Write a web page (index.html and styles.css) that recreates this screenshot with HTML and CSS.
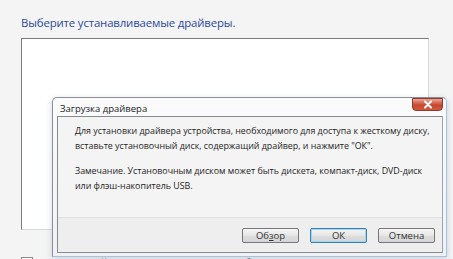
FILE: index.html
```html
<!DOCTYPE html>
<html lang="ru">
<head>
<meta charset="utf-8">
<link rel="stylesheet" href="styles.css">
</head>
<body>
<div class="page">
  <h1 class="heading">Выберите устанавливаемые драйверы.</h1>
  <div class="listbox"></div>
  <label class="hide-row"><span class="check"></span><span>Скрыть драйверы, несовместимые с оборудованием компьютера.</span></label>
</div>

<div class="dialog">
  <div class="titlebar">
    <span class="title">Загрузка драйвера</span>
    <span class="close"><svg width="12" height="9" viewBox="0 0 12 9"><path d="M3 1.5 L9 7.5 M9 1.5 L3 7.5" stroke="#fff" stroke-width="2" stroke-linecap="round"/></svg></span>
  </div>
  <div class="client">
    <div class="message">
      <p>Для установки драйвера устройства, необходимого для доступа к жесткому диску,<br>вставьте установочный диск, содержащий драйвер, и нажмите "ОК".</p>
      <p>Замечание. Установочным диском может быть дискета, компакт-диск, DVD-диск<br>или флэш-накопитель USB.</p>
    </div>
    <div class="buttons">
      <button class="btn">Об<u>з</u>ор</button>
      <button class="btn default">ОК</button>
      <button class="btn">Отмена</button>
    </div>
  </div>
</div>
</body>
</html>
```
FILE: styles.css
```css
html, body {
  margin: 0;
  padding: 0;
  width: 453px;
  height: 259px;
  overflow: hidden;
  background: #f4f4f4;
  font-family: "Open Sans", "Noto Sans", sans-serif;
}
.page {
  padding: 14px 24px 0 21px;
  display: flex;
  flex-direction: column;
}
.heading {
  margin: 0;
  font-weight: normal;
  font-size: 11.4px;
  line-height: 17px;
  color: #2b4aa0;
  letter-spacing: -0.15px;
}
.listbox {
  margin-top: 7px;
  width: 408px;
  height: 192px;
  box-sizing: border-box;
  background: #fff;
  border-top: 1px solid #7b7b7b;
  border-left: 1px solid #7b7b7b;
  border-right: 1px solid #d8d8d8;
  border-bottom: 1px solid #d8d8d8;
}
.hide-row {
  margin-top: 27px;
  display: flex;
  align-items: flex-start;
  gap: 6px;
  font-size: 11px;
  line-height: 12px;
  color: #222;
  white-space: nowrap;
}
.check {
  width: 10px;
  height: 10px;
  border: 1px solid #8a8a8a;
  background: #fafafa;
}

.dialog {
  position: absolute;
  left: 52px;
  top: 97px;
  width: 386px;
  height: 155px;
  padding: 0 3px 3px 4px;
  background: linear-gradient(#fbfbfc, #eef2f7);
  border: 1px solid #8c8f94;
  border-right-color: #a9c3dc;
  border-bottom-color: #a9c3dc;
  border-radius: 5px 5px 0 0;
  display: flex;
  flex-direction: column;
  box-shadow: 0 2px 6px rgba(120,150,180,0.35);
}
.titlebar {
  height: 18px;
  flex: none;
  position: relative;
}
.title {
  position: absolute;
  left: 3px;
  top: 5px;
  font-size: 9.5px;
  line-height: 12px;
  color: #1a1a1a;
}
.close {
  position: absolute;
  right: 0;
  top: 0;
  width: 31px;
  height: 13px;
  border-radius: 0 0 4px 4px;
  background: linear-gradient(#e9a99b, #c8462f 55%, #d0593e);
  border: 1px solid #8d3a2c;
  box-sizing: border-box;
  display: flex;
  align-items: center;
  justify-content: center;
}
.client {
  flex: 1;
  display: flex;
  flex-direction: column;
  border: 1px solid #8a8a8a;
  border-right-color: #9aa4ae;
  background: #f4f4f4;
}
.message {
  flex: 1;
  padding: 6px 0 0 17px;
  font-size: 8.9px;
  line-height: 15px;
  letter-spacing: -0.02px;
  color: #1e1e1e;
  white-space: nowrap;
}
.message p {
  margin: 0 0 10px;
}
.buttons {
  height: 35px;
  flex: none;
  border-top: 1px solid #e2e2e2;
  background: #eeeeee;
  display: flex;
  align-items: center;
  justify-content: flex-end;
  gap: 11px;
  padding: 0 7px 0 0;
  box-sizing: border-box;
}
.btn {
  width: 57px;
  height: 15px;
  padding: 0;
  font-family: inherit;
  font-size: 9.5px;
  line-height: 13px;
  color: #333;
  background: linear-gradient(#f6f6f6, #e6e6e6 50%, #dddddd 51%, #d6d6d6);
  border: 1px solid #777;
  border-radius: 2px;
}
.btn.default {
  border-color: #3c7fb1;
  box-shadow: inset 0 0 0 1px #9fd6f2;
}
.btn u {
  text-decoration: underline;
}
```
